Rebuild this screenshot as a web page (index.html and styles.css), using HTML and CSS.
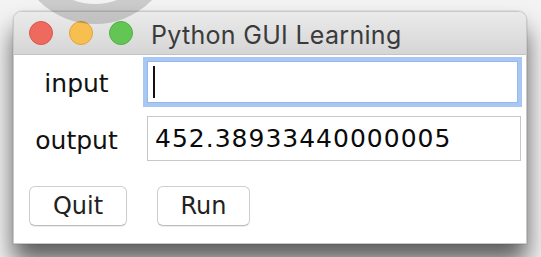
FILE: index.html
```html
<!DOCTYPE html>
<html>
<head>
<meta charset="utf-8">
<link rel="stylesheet" href="styles.css">
</head>
<body>
<div class="window">
  <div class="titlebar">
    <div class="lights">
      <span class="light red"></span>
      <span class="light yellow"></span>
      <span class="light green"></span>
    </div>
    <div class="title">Python GUI Learning</div>
  </div>
  <div class="content">
    <div class="form">
      <div class="label">input</div>
      <div class="entry focused"><span class="caret"></span></div>
      <div class="label">output</div>
      <div class="entry plain">452.38933440000005</div>
    </div>
    <div class="buttons">
      <button class="btn quit">Quit</button>
      <button class="btn run">Run</button>
    </div>
  </div>
</div>
<svg class="ring" width="200" height="40" viewBox="0 0 200 40">
  <circle cx="95" cy="-56" r="70" fill="none" stroke="rgba(0,0,0,0.16)" stroke-width="20"/>
</svg>
</body>
</html>
```

FILE: styles.css
```css
html, body {
  margin: 0;
  padding: 0;
}
body {
  width: 541px;
  height: 257px;
  overflow: hidden;
  background: #f3f3f3;
  position: relative;
  font-family: "DejaVu Sans", sans-serif;
}
.window {
  box-sizing: border-box;
  margin: 11px 0 0 13px;
  width: 514px;
  height: 233px;
  border: 1px solid #c9c9c9;
  border-radius: 9px 9px 0 0;
  background: #ffffff;
  box-shadow: 0 18px 24px rgba(0, 0, 0, 0.62), 0 0 0 1px rgba(0,0,0,0.06);
  display: flex;
  flex-direction: column;
}
.titlebar {
  box-sizing: border-box;
  height: 43px;
  border-bottom: 1px solid #c3c3c3;
  border-radius: 8px 8px 0 0;
  background: linear-gradient(#ebebeb, #d6d6d6);
  display: flex;
  align-items: center;
  padding-left: 15px;
}
.lights {
  display: flex;
  gap: 16px;
}
.light {
  box-sizing: border-box;
  width: 24px;
  height: 24px;
  border-radius: 50%;
  display: block;
}
.red { background: #ee6a5e; border: 1px solid #d9574c; }
.yellow { background: #f6bf4f; border: 1px solid #dea53d; }
.green { background: #62c554; border: 1px solid #53ae46; }
.title {
  margin-left: 18px;
  font-family: Inter, "Liberation Sans", sans-serif;
  font-size: 25px;
  letter-spacing: 0.3px;
  color: #3b3b3b;
  padding-top: 3px;
}
.content {
  padding-top: 2px;
}
.form {
  display: grid;
  grid-template-columns: 129px 379px;
  row-gap: 9px;
  align-items: center;
}
.label {
  font-size: 25px;
  color: #111;
  justify-self: center;
  padding: 3px 4px 0 0;
}
.entry {
  box-sizing: border-box;
  background: #fff;
}
.focused {
  height: 50px;
  border: 4px solid #a8c8f3;
  box-shadow: inset 0 0 0 1px #93b9ee;
  padding: 5px 0 0 6px;
}
.caret {
  display: block;
  width: 2px;
  height: 32px;
  background: #111;
}
.plain {
  margin-left: 4px;
  width: 374px;
  height: 45px;
  border: 1px solid #c8c8c8;
  padding-left: 7px;
  font-size: 25px;
  letter-spacing: 1px;
  line-height: 43px;
  color: #0a0a0a;
}
.buttons {
  display: flex;
  gap: 30px;
  margin: 25px 0 0 15px;
}
.btn {
  box-sizing: border-box;
  height: 40px;
  padding: 0;
  background: #fff;
  border: 1px solid #cfcfcf;
  border-bottom-color: #bdbdbd;
  border-radius: 6px;
  box-shadow: 0 1px 1px rgba(0,0,0,0.08);
  font-family: "DejaVu Sans", sans-serif;
  font-size: 24px;
  color: #222;
}
.quit { width: 98px; }
.run { width: 93px; }
.ring {
  position: absolute;
  left: 0;
  top: 0;
}
```
